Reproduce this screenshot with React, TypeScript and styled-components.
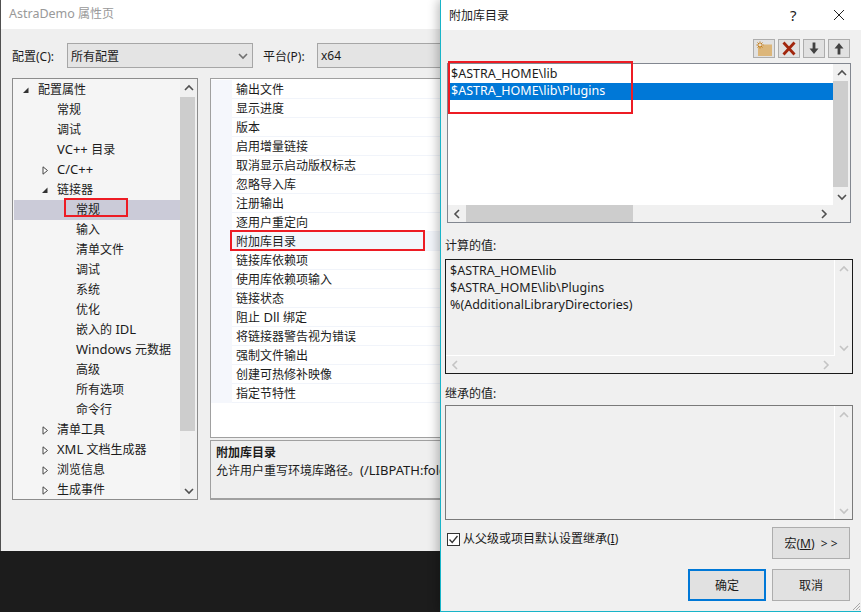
import React from "react";
import styled, { createGlobalStyle } from "styled-components";

const Global = createGlobalStyle`
  html, body { margin: 0; padding: 0; background: #1c1c1c; }
  body { font-family: "Noto Sans", "Noto Sans CJK SC", sans-serif; font-size: 12px; color: #1b1b1b; }
  * { box-sizing: border-box; }
`;

const Desktop = styled.div`
  position: relative;
  width: 861px;
  height: 612px;
  overflow: hidden;
  background: #1c1c1c;
`;

const ParentWindow = styled.div`
  position: absolute;
  left: 0;
  top: 0;
  width: 445px;
  height: 551px;
  border-left: 1px solid #505050;
  background: #efefef;
  display: flex;
  flex-direction: column;
`;

const ParentTitle = styled.div`
  height: 29px;
  flex: none;
  background: #fff;
  padding-left: 8px;
  line-height: 28px;
  color: #999;
  white-space: nowrap;
`;

const ConfigRow = styled.div`
  display: flex;
  align-items: center;
  height: 25px;
  margin-top: 14px;
  padding-left: 11px;
`;

const ConfigLabel = styled.span<{ $w: number }>`
  width: ${(p) => p.$w}px;
  flex: none;
  white-space: nowrap;
`;

const Select = styled.div<{ $w: number }>`
  width: ${(p) => p.$w}px;
  height: 25px;
  flex: none;
  background: #e4e4e4;
  border: 1px solid #a6a6a6;
  display: flex;
  align-items: center;
  justify-content: space-between;
  padding: 0 4px 0 3px;
  margin-right: 10px;
`;

const Panels = styled.div`
  display: flex;
  gap: 12px;
  margin-top: 10px;
  padding-left: 11px;
`;

const Tree = styled.div`
  width: 186px;
  height: 422px;
  flex: none;
  border: 1px solid #8c8c8c;
  background: #f5f5f5;
  display: flex;
  overflow: hidden;
`;

const TreeRows = styled.div`
  flex: 1;
  padding: 1px 0 0 1px;
  overflow: hidden;
`;

const TreeRow = styled.div<{ $level: number; $sel?: boolean }>`
  height: 20px;
  line-height: 20px;
  position: relative;
  white-space: nowrap;
  background: ${(p) => (p.$sel ? "#cbcbd8" : "transparent")};
  padding-left: ${(p) => 24 + p.$level * 19}px;
`;

const TreeArrow = styled.svg`
  position: absolute;
  top: 6px;
`;

const Latin = styled.span<{ $size?: number }>`
  font-size: ${(p) => p.$size ?? 13}px;
  line-height: 1;
`;

const VBar = styled.div<{ $bg?: string }>`
  width: 17px;
  flex: none;
  background: ${(p) => p.$bg ?? "#f0f0f0"};
  display: flex;
  flex-direction: column;
  align-items: stretch;
`;

const BarEnd = styled.div`
  height: 17px;
  flex: none;
  display: flex;
  align-items: center;
  justify-content: center;
`;

const VThumb = styled.div<{ $h: number; $mt?: number }>`
  height: ${(p) => p.$h}px;
  flex: none;
  margin: ${(p) => p.$mt ?? 0}px 2px 0 0;
  background: #cdcdcd;
`;

const Spacer = styled.div`
  flex: 1;
`;

const PropsColumn = styled.div`
  flex: 1;
  display: flex;
  flex-direction: column;
  gap: 2px;
`;

const PropList = styled.div`
  height: 360px;
  padding-top: 1px;
  border: 1px solid #a0a0a0;
  border-right: none;
  background: #fff;
`;

const PropRow = styled.div`
  height: 19px;
  display: flex;
  background: #f5f7fc;
`;

const PropCell = styled.div<{ $hl?: boolean }>`
  margin-left: 21px;
  flex: 1;
  padding-left: 4px;
  line-height: 19px;
  white-space: nowrap;
  background: ${(p) => (p.$hl ? "#f3f6fb" : "#fff")};
  border-bottom: 1px solid #f1f4fa;
`;

const Description = styled.div`
  height: 60px;
  border: 1px solid #a0a0a0;
  border-bottom-width: 2px;
  border-right: none;
  padding: 3px 0 0 5px;
  line-height: 18px;
  white-space: nowrap;
`;

const DescTitle = styled.div`
  font-weight: 700;
`;

const Mark = styled.div<{ $x: number; $y: number; $w: number; $h: number }>`
  position: absolute;
  left: ${(p) => p.$x}px;
  top: ${(p) => p.$y}px;
  width: ${(p) => p.$w}px;
  height: ${(p) => p.$h}px;
  border: 2px solid #ed1c24;
  pointer-events: none;
`;

const Dialog = styled.div`
  position: absolute;
  left: 440px;
  top: 0;
  width: 421px;
  height: 612px;
  background: #f0f0f0;
  border-left: 1px solid #18b4c8;
  border-bottom: 1px solid #18b4c8;
  box-shadow: -2px 0 10px rgba(0, 0, 0, 0.28);
  display: flex;
  flex-direction: column;
`;

const DialogTitle = styled.div`
  height: 30px;
  flex: none;
  background: #fff;
  display: flex;
  align-items: center;
  padding-left: 8px;
`;

const TitleText = styled.span`
  flex: 1;
`;

const HelpMark = styled.span`
  font-size: 15px;
  width: 43px;
  font-family: "Noto Sans", sans-serif;
`;

const CloseBox = styled.span`
  width: 28px;
  display: flex;
  align-items: center;
`;

const Toolbar = styled.div`
  display: flex;
  justify-content: flex-end;
  gap: 3px;
  margin-top: 9px;
  padding-right: 11px;
`;

const ToolBtn = styled.div`
  width: 22px;
  height: 19px;
  background: #e1e1e1;
  border: 1px solid #adadad;
  display: flex;
  align-items: center;
  justify-content: center;
`;

const EditBox = styled.div`
  margin: 5px 0 0 6px;
  width: 404px;
  height: 160px;
  background: #fff;
  border: 1px solid #828790;
  display: grid;
  grid-template-columns: 1fr 17px;
  grid-template-rows: 1fr 17px;
`;

const EditLines = styled.div`
  padding: 2px 0 0 2px;
  overflow: hidden;
`;

const EditLine = styled.div<{ $sel?: boolean }>`
  height: 17px;
  line-height: 15px;
  padding-left: 1px;
  white-space: nowrap;
  background: ${(p) => (p.$sel ? "#0078d7" : "transparent")};
  color: ${(p) => (p.$sel ? "#fff" : "#1b1b1b")};
  font-size: 12.5px;
`;

const HBar = styled.div<{ $bg?: string }>`
  display: flex;
  background: ${(p) => p.$bg ?? "#f0f0f0"};
`;

const HEnd = styled.div`
  width: 18px;
  flex: none;
  display: flex;
  align-items: center;
  justify-content: center;
`;

const HThumb = styled.div`
  width: 167px;
  background: #cdcdcd;
`;

const Corner = styled.div`
  background: #f0f0f0;
`;

const SectionLabel = styled.div<{ $top: number }>`
  margin: ${(p) => p.$top}px 0 0 4px;
  height: 18px;
  line-height: 20px;
`;

const ValueBox = styled.div<{ $border: string; $mt: number }>`
  margin: ${(p) => p.$mt}px 0 0 4px;
  width: 408px;
  height: 115px;
  border: 1px solid ${(p) => p.$border};
  display: grid;
  grid-template-columns: 1fr 17px;
  grid-template-rows: 1fr 17px;
  background: #f0f0f0;
`;

const ValueLines = styled.div`
  padding: 2px 0 0 4px;
  border-right: 1px solid #fff;
  border-bottom: 1px solid #fff;
  font-size: 12.5px;
  line-height: 17px;
  white-space: nowrap;
`;

const ValueBody = styled.div`
  border-right: 1px solid #fff;
  grid-row: 1 / span 2;
`;

const SpanBar = styled(VBar)`
  grid-row: 1 / span 2;
`;

const Footer = styled.div`
  display: flex;
  justify-content: space-between;
  margin-top: 7px;
  padding: 0 11px 0 6px;
`;

const CheckLabel = styled.label`
  display: flex;
  align-items: center;
  gap: 3px;
  height: 24px;
  white-space: nowrap;
`;

const CheckText = styled.span`
  margin-top: -2px;
`;

const CheckBox = styled.span`
  width: 13px;
  height: 13px;
  border: 1px solid #333;
  background: #fff;
  display: flex;
  align-items: center;
  justify-content: center;
`;

const Button = styled.div<{ $primary?: boolean }>`
  width: 78px;
  height: 32px;
  background: #e1e1e1;
  border: ${(p) => (p.$primary ? "2px solid #0078d7" : "1px solid #adadad")};
  display: flex;
  align-items: center;
  justify-content: center;
  white-space: nowrap;
`;

const Actions = styled.div`
  display: flex;
  justify-content: flex-end;
  gap: 6px;
  margin-top: 10px;
  padding-right: 11px;
`;

const Grip = styled.svg`
  position: absolute;
  right: 0;
  bottom: 0;
`;

const Chevron = ({ dir, color = "#505050" }: { dir: "up" | "down" | "left" | "right"; color?: string }) => {
  const d = {
    up: "M1 6 L5 2 L9 6",
    down: "M1 2 L5 6 L9 2",
    left: "M6 1 L2 5 L6 9",
    right: "M2 1 L6 5 L2 9",
  }[dir];
  const horizontal = dir === "left" || dir === "right";
  return (
    <svg width={horizontal ? 8 : 10} height={horizontal ? 10 : 8} viewBox={horizontal ? "0 0 8 10" : "0 0 10 8"}>
      <path d={d} fill="none" stroke={color} strokeWidth="1.6" />
    </svg>
  );
};

const Mixed = ({ text, size }: { text: string; size?: number }) => (
  <>
    {text.split(/([\x00-\x7f]+)/).map((part, i) =>
      i % 2 === 1 ? (
        <Latin key={i} $size={size}>
          {part}
        </Latin>
      ) : (
        part
      ),
    )}
  </>
);

type Node = { t: string; l: number; a?: "open" | "closed"; sel?: boolean };
const nodes: Node[] = [
  { t: "配置属性", l: 0, a: "open" },
  { t: "常规", l: 1 },
  { t: "调试", l: 1 },
  { t: "VC++ 目录", l: 1 },
  { t: "C/C++", l: 1, a: "closed" },
  { t: "链接器", l: 1, a: "open" },
  { t: "常规", l: 2, sel: true },
  { t: "输入", l: 2 },
  { t: "清单文件", l: 2 },
  { t: "调试", l: 2 },
  { t: "系统", l: 2 },
  { t: "优化", l: 2 },
  { t: "嵌入的 IDL", l: 2 },
  { t: "Windows 元数据", l: 2 },
  { t: "高级", l: 2 },
  { t: "所有选项", l: 2 },
  { t: "命令行", l: 2 },
  { t: "清单工具", l: 1, a: "closed" },
  { t: "XML 文档生成器", l: 1, a: "closed" },
  { t: "浏览信息", l: 1, a: "closed" },
  { t: "生成事件", l: 1, a: "closed" },
];

const props = [
  "输出文件", "显示进度", "版本", "启用增量链接", "取消显示启动版权标志", "忽略导入库", "注册输出", "逐用户重定向",
  "附加库目录", "链接库依赖项", "使用库依赖项输入", "链接状态", "阻止 Dll 绑定", "将链接器警告视为错误",
  "强制文件输出", "创建可热修补映像", "指定节特性",
];

const Arrow = ({ kind, level }: { kind: "open" | "closed"; level: number }) => (
  <TreeArrow width="8" height="9" viewBox="0 0 8 9" style={{ left: 8 + level * 19 }}>
    {kind === "open" ? (
      <path d="M6.5 1.5 V7 H1 Z" fill="#333" />
    ) : (
      <path d="M2 0.8 L6.5 4.5 L2 8.2 Z" fill="#fff" stroke="#444" />
    )}
  </TreeArrow>
);

export default function App() {
  return (
    <Desktop>
      <Global />
      <ParentWindow>
        <ParentTitle>
          <Mixed text="AstraDemo 属性页" size={12.5} />
        </ParentTitle>
        <ConfigRow>
          <ConfigLabel $w={55}>配置(C):</ConfigLabel>
          <Select $w={186}>
            <span>所有配置</span>
            <Chevron dir="down" color="#707070" />
          </Select>
          <ConfigLabel $w={54}>平台(P):</ConfigLabel>
          <Select $w={200}>
            <span>x64</span>
          </Select>
        </ConfigRow>
        <Panels>
          <Tree>
            <TreeRows>
              {nodes.map((n, i) => (
                <TreeRow key={i} $level={n.l} $sel={n.sel}>
                  {n.a && <Arrow kind={n.a} level={n.l} />}
                  <Mixed text={n.t} />
                </TreeRow>
              ))}
            </TreeRows>
            <VBar>
              <BarEnd><Chevron dir="up" /></BarEnd>
              <VThumb $h={334} $mt={1} />
              <Spacer />
              <BarEnd><Chevron dir="down" /></BarEnd>
            </VBar>
          </Tree>
          <PropsColumn>
            <PropList>
              {props.map((p) => (
                <PropRow key={p}>
                  <PropCell $hl={p === "附加库目录"}>
                    <Mixed text={p} />
                  </PropCell>
                </PropRow>
              ))}
            </PropList>
            <Description>
              <DescTitle>附加库目录</DescTitle>
              <div>
                <Mixed text="允许用户重写环境库路径。(/LIBPATH:folder)" />
              </div>
            </Description>
          </PropsColumn>
        </Panels>
      </ParentWindow>

      <Mark $x={64} $y={198} $w={64} $h={19} />
      <Mark $x={230} $y={230} $w={195} $h={21} />

      <Dialog>
        <DialogTitle>
          <TitleText>附加库目录</TitleText>
          <HelpMark>?</HelpMark>
          <CloseBox>
            <svg width="12" height="12" viewBox="0 0 12 12">
              <path d="M1 1 L11 11 M11 1 L1 11" stroke="#222" strokeWidth="1" fill="none" />
            </svg>
          </CloseBox>
        </DialogTitle>
        <Toolbar>
          <ToolBtn>
            <svg width="18" height="16" viewBox="0 0 18 16">
              <path d="M3 5 H8 V3.5 H17 V15 H3 Z" fill="#dcb67a" />
              <path d="M5 0.5 V7.5 M1.5 4 H8.5 M2.5 1.5 L7.5 6.5 M7.5 1.5 L2.5 6.5" stroke="#c27d1a" strokeWidth="1" />
              <path d="M5 3 V5 M4 4 H6" stroke="#fff" strokeWidth="1" />
            </svg>
          </ToolBtn>
          <ToolBtn>
            <svg width="14" height="15" viewBox="0 0 14 15">
              <path d="M1.5 1.5 L12.5 13.5 M12.5 1.5 L1.5 13.5" stroke="#a1260d" strokeWidth="2.8" />
            </svg>
          </ToolBtn>
          <ToolBtn>
            <svg width="10" height="13" viewBox="0 0 10 13">
              <path d="M3.6 0.5 H6.4 V6.5 H9.5 L5 12 L0.5 6.5 H3.6 Z" fill="#424242" />
            </svg>
          </ToolBtn>
          <ToolBtn>
            <svg width="10" height="13" viewBox="0 0 10 13">
              <path d="M3.6 12.5 H6.4 V6.5 H9.5 L5 1 L0.5 6.5 H3.6 Z" fill="#424242" />
            </svg>
          </ToolBtn>
        </Toolbar>
        <EditBox>
          <EditLines>
            <EditLine>$ASTRA_HOME\lib</EditLine>
            <EditLine $sel>$ASTRA_HOME\lib\Plugins</EditLine>
          </EditLines>
          <VBar $bg="#f0f0f0">
            <BarEnd><Chevron dir="up" /></BarEnd>
            <VThumb $h={106} />
            <Spacer />
            <BarEnd><Chevron dir="down" /></BarEnd>
          </VBar>
          <HBar>
            <HEnd><Chevron dir="left" /></HEnd>
            <HThumb />
            <Spacer />
            <HEnd><Chevron dir="right" /></HEnd>
          </HBar>
          <Corner />
        </EditBox>
        <SectionLabel $top={13}>计算的值:</SectionLabel>
        <ValueBox $border="#1a1a1a" $mt={5}>
          <ValueLines>
            $ASTRA_HOME\lib
            <br />
            $ASTRA_HOME\lib\Plugins
            <br />
            %(AdditionalLibraryDirectories)
          </ValueLines>
          <VBar>
            <BarEnd><Chevron dir="up" color="#c4c4c4" /></BarEnd>
            <Spacer />
            <BarEnd><Chevron dir="down" color="#c4c4c4" /></BarEnd>
          </VBar>
          <HBar>
            <HEnd><Chevron dir="left" color="#c4c4c4" /></HEnd>
            <Spacer />
            <HEnd><Chevron dir="right" color="#c4c4c4" /></HEnd>
          </HBar>
          <Corner />
        </ValueBox>
        <SectionLabel $top={10}>继承的值:</SectionLabel>
        <ValueBox $border="#7a7a7a" $mt={3}>
          <ValueBody />
          <SpanBar>
            <BarEnd><Chevron dir="up" color="#c4c4c4" /></BarEnd>
            <Spacer />
            <BarEnd><Chevron dir="down" color="#c4c4c4" /></BarEnd>
          </SpanBar>
        </ValueBox>
        <Footer>
          <CheckLabel>
            <CheckBox>
              <svg width="11" height="11" viewBox="0 0 11 11">
                <path d="M1.5 5.5 L4.2 8.5 L9.5 2" fill="none" stroke="#333" strokeWidth="1.3" />
              </svg>
            </CheckBox>
            <CheckText>从父级或项目默认设置继承(<u>I</u>)</CheckText>
          </CheckLabel>
          <Button>宏(<u>M</u>)&nbsp;&nbsp;&gt; &gt;</Button>
        </Footer>
        <Actions>
          <Button $primary>确定</Button>
          <Button>取消</Button>
        </Actions>
        <Grip width="10" height="10" viewBox="0 0 10 10">
          <path d="M9 2 L2 9 M9 5 L5 9 M9 8 L8 9" stroke="#a8a8a8" strokeWidth="1" />
        </Grip>
      </Dialog>
      <Mark $x={448} $y={61} $w={185} $h={53} />
    </Desktop>
  );
}
